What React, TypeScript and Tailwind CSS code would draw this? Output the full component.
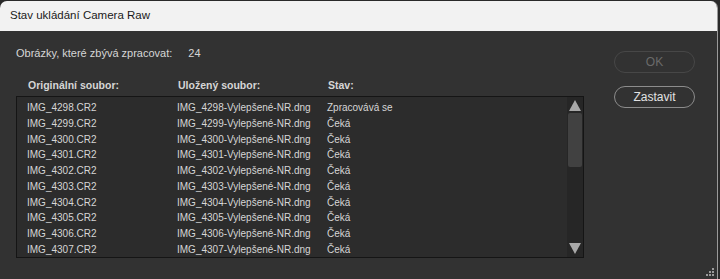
import { useState } from 'react';

type Row = { src: string; out: string; state: string };

const rows: Row[] = Array.from({ length: 10 }, (_, i) => {
  const n = 4298 + i;
  return {
    src: `IMG_${n}.CR2`,
    out: `IMG_${n}-Vylepšené-NR.dng`,
    state: i === 0 ? 'Zpracovává se' : 'Čeká',
  };
});

function Scrollbar() {
  return (
    <div className="flex w-[16px] flex-col items-center bg-[#262626]">
      <svg width="16" height="16" viewBox="0 0 16 16" className="shrink-0">
        <polygon points="8,3 14,14 2,14" fill="#a8a8a8" />
      </svg>
      <div className="h-[54px] w-[14px] rounded-[2px] bg-[#414141]" />
      <div className="flex-1" />
      <svg width="16" height="16" viewBox="0 0 16 16" className="shrink-0">
        <polygon points="2,2 14,2 8,13" fill="#a8a8a8" />
      </svg>
    </div>
  );
}

export default function App() {
  const [stopped, setStopped] = useState(false);

  return (
    <div className="h-[279px] w-[720px] overflow-hidden bg-[#2a2a2a] pt-[1px] pr-[2px] font-['Liberation_Sans',Arial,sans-serif]">
      <div className="flex h-[278px] flex-col overflow-hidden rounded-t-[7px] border-r border-[#9a9a9a] bg-[#323232]">
        <div className="flex h-[30px] shrink-0 items-center bg-[#f2f2f2] pl-[10px] text-[11.5px] text-[#1a1a1a]">
          Stav ukládání Camera Raw
        </div>

        <div className="flex flex-1 whitespace-nowrap pl-[16px] pt-[12px] text-[11px] text-[#d6d6d6]">
          <div className="flex w-[568px] flex-col">
            <div className="flex h-[20px] items-center">
              <span>Obrázky, které zbývá zpracovat:</span>
              <span className="ml-[16px]">24</span>
            </div>
            <div className="mt-[13px] grid h-[20px] grid-cols-[150px_150px_1fr] items-center pl-[12px] text-[10.5px] font-bold">
              <span>Originální soubor:</span>
              <span>Uložený soubor:</span>
              <span>Stav:</span>
            </div>
            <div className="flex h-[162px] border border-[#151515] bg-[#2c2c2c]">
              <div className="flex flex-1 flex-col pt-[3px] text-[10px]">
                {rows.map((r) => (
                  <div key={r.src} className="grid h-[16px] grid-cols-[150px_150px_1fr] items-center pl-[10px]">
                    <span>{r.src}</span>
                    <span>{r.out}</span>
                    <span>{r.state}</span>
                  </div>
                ))}
              </div>
              <Scrollbar />
            </div>
          </div>

          <div className="ml-[30px] flex flex-col gap-[13px] pt-[8px]">
            <button
              disabled
              className="h-[22px] w-[81px] rounded-full border border-[#474747] text-[12px] text-[#6a6a6a]"
            >
              OK
            </button>
            <button
              onClick={() => setStopped(true)}
              className="h-[22px] w-[81px] rounded-full border border-[#8c8c8c] text-[12px] text-[#e2e2e2]"
            >
              {stopped ? 'Zastaveno' : 'Zastavit'}
            </button>
          </div>
        </div>

        <div className="flex h-[10px] shrink-0 items-end justify-end pb-[2px] pr-[2px]">
          <svg width="9" height="9" viewBox="0 0 9 9">
            <rect x="6" y="0" width="2" height="2" fill="#9a9a9a" />
            <rect x="3" y="3" width="2" height="2" fill="#9a9a9a" />
            <rect x="6" y="3" width="2" height="2" fill="#9a9a9a" />
            <rect x="0" y="6" width="2" height="2" fill="#9a9a9a" />
            <rect x="3" y="6" width="2" height="2" fill="#9a9a9a" />
            <rect x="6" y="6" width="2" height="2" fill="#9a9a9a" />
          </svg>
        </div>
      </div>
    </div>
  );
}
